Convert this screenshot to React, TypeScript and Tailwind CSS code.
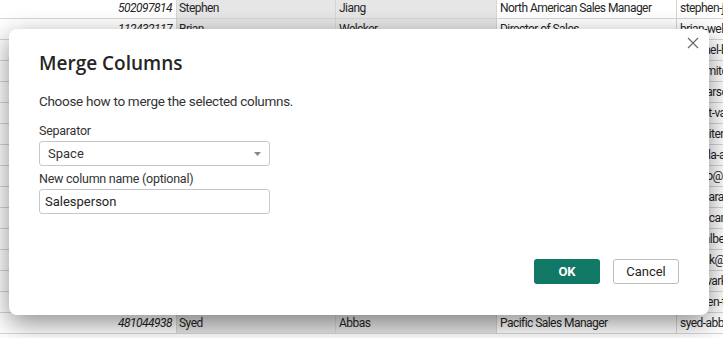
import React from "react";

const rows: [string, string, string, string, string][] = [
  ["502097814", "Stephen", "Jiang", "North American Sales Manager", "stephen-jiang@adventure-works.com"],
  ["112432117", "Brian", "Welcker", "Director of Sales", "brian-welcker@adventure-works.com"],
  ["841560125", "Michael", "Blythe", "Sales Representative", "michael-blythe@adventure-works.com"],
  ["191644724", "Linda", "Mitchell", "Sales Representative", "linda-mitchell@adventure-works.com"],
  ["615389812", "Jillian", "Carson", "Sales Representative", "jillia-carson@adventure-works.com"],
  ["234474252", "Garrett", "Vargas", "Sales Representative", "garrett-vargas@adventure-works.com"],
  ["716374314", "Tsvi", "Reiter", "Sales Representative", "tsvi-reiter@adventure-works.com"],
  ["61161660", "Pamela", "Ansman-Wolfe", "Sales Representative", "pamela-ansman@adventure-works.com"],
  ["139397894", "Shu", "Ito", "Sales Representative", "shu-ito@adventure-works.com"],
  ["399771412", "José", "Saraiva", "Sales Representative", "jose-saraiva@adventure-works.com"],
  ["987554265", "David", "Campbell", "Sales Representative", "david-campbell@adventure-works.com"],
  ["982310417", "Amy", "Alberts", "European Sales Manager", "amy-alberts@adventure-works.com"],
  ["954276278", "Jae", "Pak", "Sales Representative", "jae-pak@adventure-works.com"],
  ["758596752", "Ranjit", "Varkey Chudukatil", "Sales Representative", "ranjit-varkey@adventure-works.com"],
  ["658797903", "Lynn", "Tsoflias", "Sales Representative", "stephen-tsoflias@adventure-works.com"],
  ["481044938", "Syed", "Abbas", "Pacific Sales Manager", "syed-abbas@adventure-works.com"],
];

export default function App() {
  return (
    <div
      className="relative w-[723px] h-[338px] overflow-hidden bg-white text-[#252525]"
      style={{ fontFamily: 'Roboto, "Open Sans", sans-serif' }}
    >
      <div className="-mt-[2px] flex flex-col text-[12px] tracking-[-0.55px]">
        {rows.map((r, i) => (
          <div key={i} className="flex h-[21px] border-b border-[#d6d6d6] shrink-0">
            <div className="w-[177px] shrink-0 border-r border-[#d6d6d6] pr-[4px] text-right italic leading-[20px] whitespace-nowrap overflow-hidden">
              {r[0]}
            </div>
            <div className="w-[159px] shrink-0 border-r border-[#d6d6d6] bg-[#e6e6e6] pl-[2px] leading-[20px] whitespace-nowrap overflow-hidden">
              {r[1]}
            </div>
            <div className="w-[161px] shrink-0 border-r border-[#d6d6d6] bg-[#e6e6e6] pl-[3px] leading-[20px] whitespace-nowrap overflow-hidden">
              {r[2]}
            </div>
            <div className="w-[180px] shrink-0 border-r border-[#d6d6d6] pl-[3px] leading-[20px] whitespace-nowrap overflow-hidden">
              {r[3]}
            </div>
            <div className="flex-1 pl-[3px] leading-[20px] whitespace-nowrap overflow-hidden">{r[4]}</div>
          </div>
        ))}
      </div>

      <div className="absolute left-[9px] top-[29px] w-[700px] h-[286px] rounded-[8px] bg-white shadow-[0_8px_26px_rgba(0,0,0,0.45)] flex flex-col pl-[30px] pr-[30px] pt-[20px] pb-[31px]">
        <button className="absolute right-[9px] top-[7px] w-[14px] h-[14px] flex items-center justify-center">
          <svg width="12" height="12" viewBox="0 0 12 12">
            <path d="M1 1 L11 11 M11 1 L1 11" stroke="#666" strokeWidth="1.1" fill="none" />
          </svg>
        </button>
        <h1
          className="text-[19px] font-semibold leading-[28px] text-[#252525]"
          style={{ fontFamily: '"Open Sans", sans-serif' }}
        >
          Merge Columns
        </h1>
        <p className="mt-[15px] text-[13.5px] tracking-[-0.3px] leading-[18px] text-[#333]">
          Choose how to merge the selected columns.
        </p>
        <label className="mt-[12px] text-[12.5px] tracking-[-0.25px] leading-[18px] text-[#333]">Separator</label>
        <div className="mt-[1px] w-[231px] h-[25px] rounded-[3px] border border-[#c8c8c8] flex items-center justify-between pl-[8px] pr-[8px] text-[13px] text-[#333]">
          <span>Space</span>
          <svg width="7" height="4" viewBox="0 0 7 4">
            <path d="M0 0 L7 0 L3.5 4 Z" fill="#888" />
          </svg>
        </div>
        <label className="mt-[4px] text-[12.5px] tracking-[-0.25px] leading-[18px] text-[#333]">
          New column name (optional)
        </label>
        <div className="mt-[1px] w-[231px] h-[25px] rounded-[3px] border border-[#c8c8c8] flex items-center pl-[5px] text-[13px] text-[#252525]">
          Salesperson
        </div>
        <div className="mt-auto flex justify-end gap-[13px]">
          <button className="w-[66px] h-[25px] rounded-[3px] bg-[#117865] text-white text-[13px] font-bold">OK</button>
          <button className="w-[66px] h-[25px] rounded-[3px] border border-[#bdbdbd] bg-white text-[#252525] text-[13px]">
            Cancel
          </button>
        </div>
      </div>
    </div>
  );
}
